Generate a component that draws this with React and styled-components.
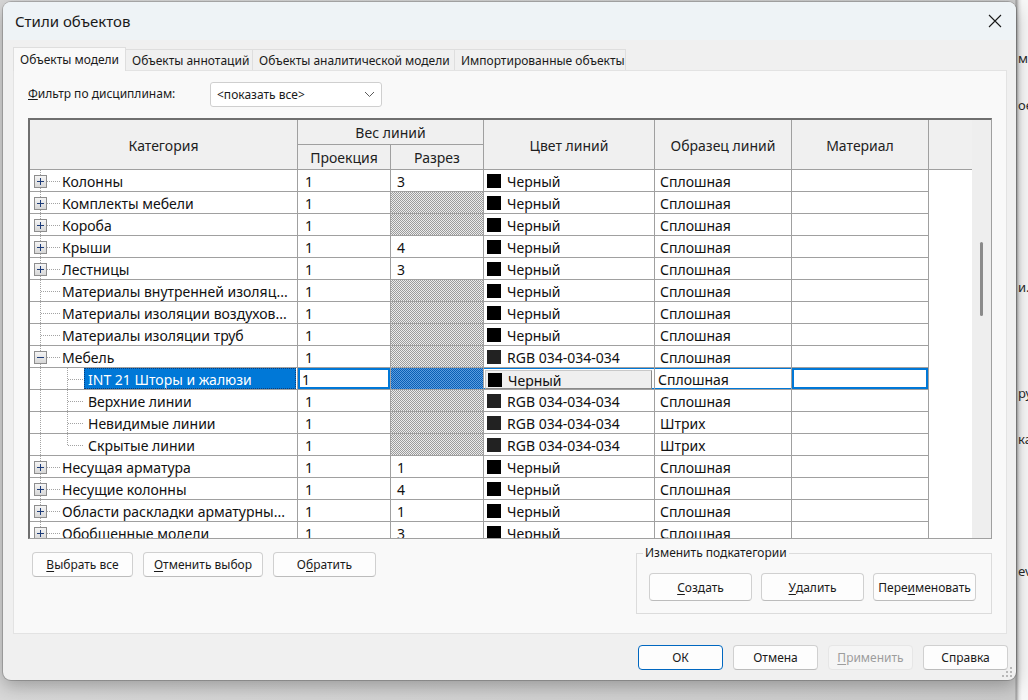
import React from "react";
import styled, { createGlobalStyle, css } from "styled-components";

const GlobalStyle = createGlobalStyle`
  html, body { margin: 0; padding: 0; }
  body { font-family: "Noto Sans", "Segoe UI", sans-serif; color: #1a1a1a; }
`;

const COLS = "268px 93px 93px 171px 137px 137px 43px";
const HATCH = "repeating-conic-gradient(#9c9c9c 0% 25%, #ececec 0% 50%) 0 0 / 2px 2px";
const HATCH_SEL = "repeating-conic-gradient(#0a5fb4 0% 25%, #5a9ce0 0% 50%) 0 0 / 2px 2px";
const BLUE = "#0078d7";

const Screen = styled.div`
  position: relative;
  width: 1028px;
  height: 700px;
  overflow: hidden;
  box-sizing: border-box;
  padding: 2px 0 0 3px;
  background: linear-gradient(to right, #d8d8d8 0, #cbcbcb 1015px, #9a9a9a 1016px, #e4e4e4 1019px, #f7f7f7 1022px);
`;

const Backdrop = styled.span`
  position: absolute;
  left: 1018px;
  font-size: 13px;
  color: #2a2a2a;
  white-space: nowrap;
`;

const Dialog = styled.div`
  position: relative;
  z-index: 1;
  width: 1013px;
  height: 678px;
  border-radius: 8px;
  overflow: hidden;
  background: #f0f0f0;
  box-shadow: 0 0 0 1px rgba(0, 0, 0, 0.18), 0 6px 18px rgba(0, 0, 0, 0.28);
  display: flex;
  flex-direction: column;
`;

const TitleBar = styled.div`
  height: 38px;
  flex: none;
  display: flex;
  align-items: center;
  justify-content: space-between;
  padding: 0 14px 0 12px;
  background: #eef3f6;
  font-size: 15px;
  color: #1a1a1a;
`;

const DialogBody = styled.div`
  flex: 1;
  display: flex;
  flex-direction: column;
  padding: 7px 9px 0 10px;
`;

const TabStrip = styled.div`
  display: flex;
  align-items: flex-end;
  height: 23px;
  position: relative;
  z-index: 2;
`;

const Tab = styled.div`
  box-sizing: border-box;
  width: ${(p) => p.$w}px;
  height: ${(p) => (p.$active ? 24 : 21)}px;
  margin-bottom: ${(p) => (p.$active ? -1 : 0)}px;
  padding-left: 6px;
  display: flex;
  align-items: center;
  font-size: 12px;
  border: 1px solid #dedede;
  border-bottom: none;
  margin-left: ${(p) => (p.$first ? 0 : -1)}px;
  background: ${(p) => (p.$active ? "#f9f9f9" : "#f0f0f0")};
  color: #1a1a1a;
`;

const Panel = styled.div`
  box-sizing: border-box;
  height: 564px;
  border: 1px solid #e3e3e3;
  background: #f9f9f9;
  padding: 11px 14px 0 14px;
  display: flex;
  flex-direction: column;
`;

const FilterRow = styled.div`
  display: flex;
  align-items: center;
  height: 25px;
`;

const FilterLabel = styled.div`
  width: 182px;
  font-size: 12px;
  margin-top: -3px;
`;

const Select = styled.div`
  box-sizing: border-box;
  width: 172px;
  height: 25px;
  background: #ffffff;
  border: 1px solid #cfcfcf;
  border-radius: 3px;
  display: flex;
  align-items: center;
  justify-content: space-between;
  padding: 0 6px 0 6px;
  font-size: 12px;
`;

const Table = styled.div`
  margin-top: 11px;
  box-sizing: border-box;
  width: 964px;
  height: 421px;
  border-top: 2px solid #6f6f6f;
  border-left: 2px solid #6f6f6f;
  border-right: 1px solid #a0a0a0;
  border-bottom: 1px solid #a0a0a0;
  display: flex;
  overflow: hidden;
  background: #ffffff;
`;

const GridSide = styled.div`
  width: 942px;
  display: flex;
  flex-direction: column;
`;

const HeaderGrid = styled.div`
  display: grid;
  grid-template-columns: ${COLS};
  grid-template-rows: 25px 25px;
  background: #f0f0f0;
`;

const HeadCell = styled.div`
  box-sizing: border-box;
  grid-row: span ${(p) => p.$rows || 1};
  grid-column: span ${(p) => p.$cols || 1};
  border-right: ${(p) => (p.$last ? "none" : "1px solid #a0a0a0")};
  border-bottom: 1px solid #a0a0a0;
  display: flex;
  align-items: center;
  justify-content: center;
  padding-top: 1px;
  font-size: 14px;
  color: #1e1e1e;
`;

const Body = styled.div`
  flex: 1;
  overflow: hidden;
`;

const Row = styled.div`
  display: grid;
  grid-template-columns: ${COLS};
  height: 22px;
`;

const Cell = styled.div`
  box-sizing: border-box;
  height: 22px;
  border-right: 1px solid #a0a0a0;
  border-bottom: 1px solid #a0a0a0;
  display: flex;
  align-items: center;
  padding-top: 1px;
  padding-left: ${(p) => p.$pad ?? 6}px;
  font-size: 14px;
  color: #111;
  white-space: nowrap;
  overflow: hidden;
  background: ${(p) => (p.$hatch ? (p.$sel ? HATCH_SEL : HATCH) : "#ffffff")};
  ${(p) =>
    p.$box &&
    css`
      box-shadow: inset 0 0 0 2px ${BLUE};
    `}
  ${(p) =>
    p.$band &&
    css`
      box-shadow: inset 0 1px 0 ${BLUE}, inset 0 -1px 0 ${BLUE};
    `}
`;

const Filler = styled.div`
  background: #ffffff;
`;

const TreeCell = styled(Cell)`
  padding-left: 0;
  padding-top: 0;
  align-items: stretch;
`;

const TreeName = styled.span`
  display: flex;
  align-items: center;
  flex: 1;
  min-width: 0;
  padding-top: 1px;
  padding-left: ${(p) => (p.$child ? 4 : 0)}px;
  margin-right: ${(p) => (p.$sel ? 1 : 0)}px;
  background: ${(p) => (p.$sel ? BLUE : "transparent")};
  color: ${(p) => (p.$sel ? "#ffffff" : "#111")};
  outline: ${(p) => (p.$sel ? "1px dotted #0b3d7a" : "none")};
  outline-offset: -1px;
  overflow: hidden;
`;

const Swatch = styled.span`
  width: 14px;
  height: 14px;
  flex: none;
  margin-right: 6px;
  margin-top: -1px;
  background: ${(p) => p.$c};
`;

const ColorButton = styled.div`
  box-sizing: border-box;
  flex: 1;
  height: 19px;
  margin: 0 2px 0 -2px;
  display: flex;
  align-items: center;
  padding: 3px 0 0 2px;
  background: #efefef;
  border: 1px solid #c8c8c8;
  border-right-color: #8a8a8a;
  border-bottom-color: #8a8a8a;
`;

const ScrollTrack = styled.div`
  width: 19px;
  box-sizing: border-box;
  padding-top: 122px;
  background: #eeeeee;
`;

const ScrollThumb = styled.div`
  width: 3px;
  height: 74px;
  margin-left: 8px;
  border-radius: 2px;
  background: #8a8a8a;
`;

const BottomRow = styled.div`
  display: flex;
  justify-content: space-between;
  align-items: flex-start;
  margin-top: 6px;
`;

const ButtonGroup = styled.div`
  display: flex;
  gap: ${(p) => p.$gap ?? 10}px;
  margin-top: ${(p) => p.$top ?? 0}px;
  margin-left: ${(p) => p.$left ?? 0}px;
`;

const Button = styled.div`
  box-sizing: border-box;
  width: ${(p) => p.$w}px;
  height: ${(p) => p.$h ?? 25}px;
  display: flex;
  align-items: center;
  justify-content: center;
  font-size: 12px;
  border-radius: 4px;
  background: ${(p) => (p.$disabled ? "#f5f5f5" : "#fdfdfd")};
  color: ${(p) => (p.$disabled ? "#9d9d9d" : "#1a1a1a")};
  border: 1px solid ${(p) => (p.$default ? "#0067c0" : p.$disabled ? "#e6e6e6" : "#d0d0d0")};
  border-bottom-color: ${(p) => (p.$default ? "#0067c0" : p.$disabled ? "#e6e6e6" : "#bcbcbc")};
  u {
    text-underline-offset: 2px;
  }
`;

const GroupBox = styled.fieldset`
  box-sizing: border-box;
  width: 356px;
  margin: 0;
  padding: 0 15px 12px 12px;
  border: 1px solid #dcdcdc;
  border-radius: 0;
`;

const Legend = styled.legend`
  font-size: 12px;
  padding: 0 2px;
  margin-left: -6px;
  line-height: 16px;
  color: #1a1a1a;
`;

const Footer = styled.div`
  display: flex;
  justify-content: flex-end;
  gap: 10px;
  padding: 11px 0 0 0;
  margin-right: -1px;
`;

const Grip = styled.svg`
  position: absolute;
  right: 3px;
  bottom: 2px;
`;

function CloseIcon() {
  return (
    <svg width="14" height="14" viewBox="0 0 14 14">
      <path d="M1 1 L13 13 M13 1 L1 13" stroke="#1a1a1a" strokeWidth="1.1" fill="none" />
    </svg>
  );
}

function Chevron() {
  return (
    <svg width="11" height="7" viewBox="0 0 11 7">
      <path d="M1 1 L5.5 5.5 L10 1" stroke="#5a5a5a" strokeWidth="1" fill="none" />
    </svg>
  );
}

function TreeLines({ kind }) {
  const dot = { stroke: "#a3a3a3", strokeWidth: 1, strokeDasharray: "1 1", fill: "none" };
  const child = kind === "child" || kind === "childLast";
  const w = child ? 54 : 32;
  return (
    <svg width={w} height="21" viewBox={`0 0 ${w} 21`} style={{ flex: "none" }} shapeRendering="crispEdges">
      <path d="M10.5 0 V21" {...dot} />
      {!child && kind === "leaf" && <path d="M11 11.5 H30" {...dot} />}
      {!child && kind !== "leaf" && <path d="M17 11.5 H30" {...dot} />}
      {child && <path d={kind === "childLast" ? "M37.5 0 V11" : "M37.5 0 V21"} {...dot} />}
      {child && <path d="M38 11.5 H54" {...dot} />}
      {(kind === "plus" || kind === "minus") && (
        <g>
          <defs>
            <linearGradient id="bx" x1="0" y1="0" x2="0" y2="1">
              <stop offset="0" stopColor="#f6f6f6" />
              <stop offset="1" stopColor="#d6d6d6" />
            </linearGradient>
          </defs>
          <rect x="4.5" y="5.5" width="12" height="12" fill="url(#bx)" stroke="#8e8e8e" />
          <path d="M7 11.5 H14" stroke="#1e3c78" strokeWidth="1" />
          {kind === "plus" && <path d="M10.5 8 V15" stroke="#1e3c78" strokeWidth="1" />}
        </g>
      )}
    </svg>
  );
}

const BLACK = "#000000";
const DARK = "#222222";

const rows = [
  { name: "Колонны", kind: "plus", cut: "3", color: "Черный", sw: BLACK, pat: "Сплошная" },
  { name: "Комплекты мебели", kind: "plus", color: "Черный", sw: BLACK, pat: "Сплошная" },
  { name: "Короба", kind: "plus", color: "Черный", sw: BLACK, pat: "Сплошная" },
  { name: "Крыши", kind: "plus", cut: "4", color: "Черный", sw: BLACK, pat: "Сплошная" },
  { name: "Лестницы", kind: "plus", cut: "3", color: "Черный", sw: BLACK, pat: "Сплошная" },
  { name: "Материалы внутренней изоляц...", kind: "leaf", color: "Черный", sw: BLACK, pat: "Сплошная" },
  { name: "Материалы изоляции воздухов...", kind: "leaf", color: "Черный", sw: BLACK, pat: "Сплошная" },
  { name: "Материалы изоляции труб", kind: "leaf", color: "Черный", sw: BLACK, pat: "Сплошная" },
  { name: "Мебель", kind: "minus", color: "RGB 034-034-034", sw: DARK, pat: "Сплошная" },
  { name: "INT 21 Шторы и жалюзи", kind: "child", sel: true, color: "Черный", sw: BLACK, pat: "Сплошная" },
  { name: "Верхние линии", kind: "child", color: "RGB 034-034-034", sw: DARK, pat: "Сплошная" },
  { name: "Невидимые линии", kind: "child", color: "RGB 034-034-034", sw: DARK, pat: "Штрих" },
  { name: "Скрытые линии", kind: "childLast", color: "RGB 034-034-034", sw: DARK, pat: "Штрих" },
  { name: "Несущая арматура", kind: "plus", cut: "1", color: "Черный", sw: BLACK, pat: "Сплошная" },
  { name: "Несущие колонны", kind: "plus", cut: "4", color: "Черный", sw: BLACK, pat: "Сплошная" },
  { name: "Области раскладки арматурны...", kind: "plus", cut: "1", color: "Черный", sw: BLACK, pat: "Сплошная" },
  { name: "Обобщенные модели", kind: "plus", cut: "3", color: "Черный", sw: BLACK, pat: "Сплошная" },
];

const tabs = [
  { label: "Объекты модели", w: 113, active: true },
  { label: "Объекты аннотаций", w: 128 },
  { label: "Объекты аналитической модели", w: 203 },
  { label: "Импортированные объекты", w: 172 },
];

const fragments = [
  { top: 49, text: "мм" },
  { top: 96, text: "ое" },
  { top: 278, text: "и." },
  { top: 384, text: "ру" },
  { top: 430, text: "ка" },
  { top: 562, text: "ev" },
];

function TableRow({ r }) {
  const child = r.kind === "child" || r.kind === "childLast";
  return (
    <Row>
      <TreeCell>
        <TreeLines kind={r.kind} />
        <TreeName $sel={r.sel} $child={child}>
          {r.name}
        </TreeName>
      </TreeCell>
      <Cell $pad={r.sel ? 4 : 7} $box={r.sel}>1</Cell>
      <Cell $hatch={!r.cut} $sel={r.sel}>{r.cut}</Cell>
      {r.sel ? (
        <Cell $pad={3} $band>
          <ColorButton>
            <Swatch $c={r.sw} />
            {r.color}
          </ColorButton>
        </Cell>
      ) : (
        <Cell $pad={3}>
          <Swatch $c={r.sw} />
          {r.color}
        </Cell>
      )}
      <Cell $pad={r.sel ? 3 : 5} $band={r.sel}>{r.pat}</Cell>
      <Cell $box={r.sel} />
      <Filler />
    </Row>
  );
}

export default function App() {
  return (
    <Screen>
      <GlobalStyle />
      {fragments.map((f) => (
        <Backdrop key={f.top} style={{ top: f.top }}>
          {f.text}
        </Backdrop>
      ))}
      <Dialog>
        <TitleBar>
          <span>Стили объектов</span>
          <CloseIcon />
        </TitleBar>
        <DialogBody>
          <TabStrip>
            {tabs.map((t, i) => (
              <Tab key={t.label} $w={t.w} $active={t.active} $first={i === 0}>
                {t.label}
              </Tab>
            ))}
          </TabStrip>
          <Panel>
            <FilterRow>
              <FilterLabel>
                <u>Ф</u>ильтр по дисциплинам:
              </FilterLabel>
              <Select>
                <span>&lt;показать все&gt;</span>
                <Chevron />
              </Select>
            </FilterRow>
            <Table>
              <GridSide>
                <HeaderGrid>
                  <HeadCell $rows={2}>Категория</HeadCell>
                  <HeadCell $cols={2}>Вес линий</HeadCell>
                  <HeadCell $rows={2}>Цвет линий</HeadCell>
                  <HeadCell $rows={2}>Образец линий</HeadCell>
                  <HeadCell $rows={2}>Материал</HeadCell>
                  <HeadCell $rows={2} $last />
                  <HeadCell>Проекция</HeadCell>
                  <HeadCell>Разрез</HeadCell>
                </HeaderGrid>
                <Body>
                  {rows.map((r) => (
                    <TableRow key={r.name} r={r} />
                  ))}
                </Body>
              </GridSide>
              <ScrollTrack>
                <ScrollThumb />
              </ScrollTrack>
            </Table>
            <BottomRow>
              <ButtonGroup $top={7} $left={4}>
                <Button $w={101}>
                  <u>В</u>ыбрать все
                </Button>
                <Button $w={120}>
                  <u>О</u>тменить выбор
                </Button>
                <Button $w={103}>
                  О<u>б</u>ратить
                </Button>
              </ButtonGroup>
              <GroupBox>
                <Legend>Изменить подкатегории</Legend>
                <ButtonGroup $gap={9} $top={12}>
                  <Button $w={103} $h={28}>
                    <u>С</u>оздать
                  </Button>
                  <Button $w={103} $h={28}>
                    <u>У</u>далить
                  </Button>
                  <Button $w={103} $h={28}>
                    Пере<u>и</u>меновать
                  </Button>
                </ButtonGroup>
              </GroupBox>
            </BottomRow>
          </Panel>
          <Footer>
            <Button $w={85} $default>
              ОК
            </Button>
            <Button $w={85}>Отмена</Button>
            <Button $w={85} $disabled>
              <u>П</u>рименить
            </Button>
            <Button $w={85}>Справка</Button>
          </Footer>
        </DialogBody>
        <Grip width="12" height="12" viewBox="0 0 12 12">
          {[
            [9, 1],
            [9, 5],
            [5, 5],
            [9, 9],
            [5, 9],
            [1, 9],
          ].map(([x, y]) => (
            <rect key={`${x}-${y}`} x={x} y={y} width="2" height="2" fill="#b8b8b8" />
          ))}
        </Grip>
      </Dialog>
    </Screen>
  );
}
